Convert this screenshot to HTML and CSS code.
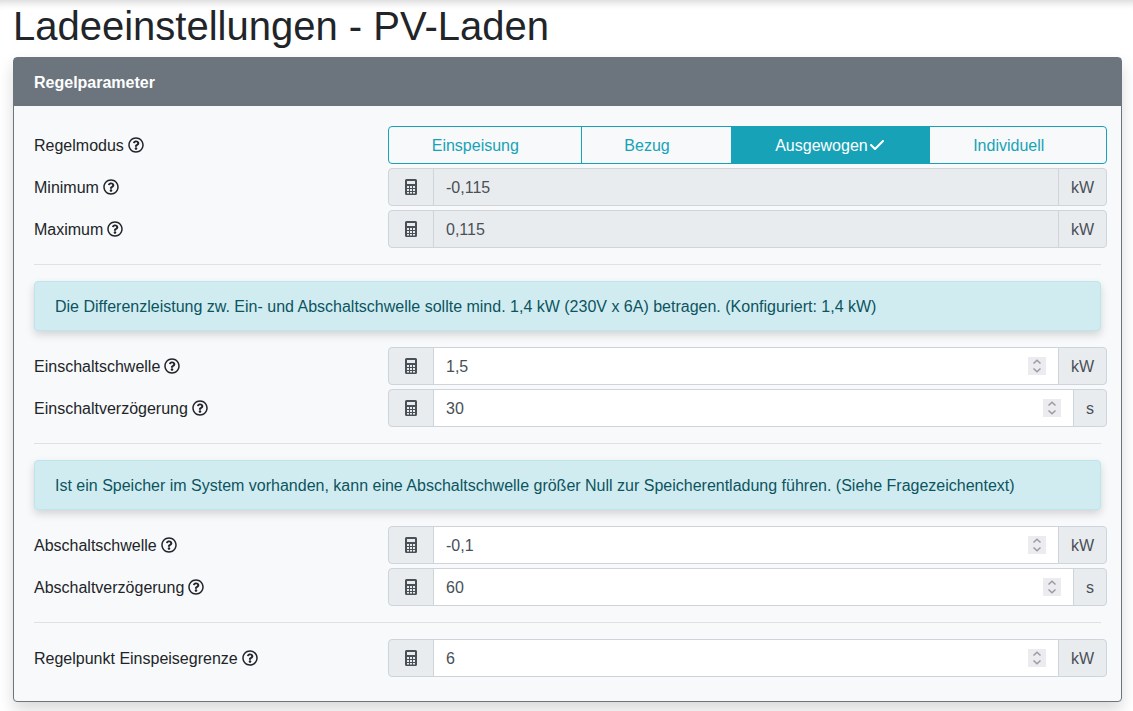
FILE: index.html
```html
<!DOCTYPE html>
<html lang="de">
<head>
<meta charset="utf-8">
<title>Ladeeinstellungen - PV-Laden</title>
<link rel="stylesheet" href="styles.css">
</head>
<body>
<svg class="sprite" aria-hidden="true">
  <symbol id="q" viewBox="0 0 512 512"><path d="M256 8C119.043 8 8 119.083 8 256c0 136.997 111.043 248 248 248s248-111.003 248-248C504 119.083 392.957 8 256 8zm0 448c-110.532 0-200-89.431-200-200 0-110.495 89.472-200 200-200 110.491 0 200 89.471 200 200 0 110.53-89.431 200-200 200zm107.244-255.2c0 67.052-72.421 68.084-72.421 92.863V300c0 6.627-5.373 12-12 12h-45.647c-6.627 0-12-5.373-12-12v-8.659c0-35.745 27.1-50.034 47.579-61.516 17.561-9.845 28.324-16.541 28.324-29.579 0-17.246-21.999-28.693-39.784-28.693-23.189 0-33.894 10.977-48.942 29.969-4.057 5.12-11.46 6.071-16.666 2.124l-27.824-21.098c-5.107-3.872-6.251-11.066-2.644-16.363C184.846 131.491 214.94 112 261.794 112c49.071 0 101.45 38.304 101.45 88.8zM298 368c0 23.159-18.841 42-42 42s-42-18.841-42-42 18.841-42 42-42 42 18.841 42 42z"/></symbol>
  <symbol id="calc" viewBox="0 0 12 16"><path fill-rule="evenodd" d="M1.5 0h9A1.5 1.5 0 0 1 12 1.5v13a1.5 1.5 0 0 1-1.5 1.5h-9A1.5 1.5 0 0 1 0 14.5v-13A1.5 1.5 0 0 1 1.5 0zM2 2v3h8V2zM2 7v2h2V7zM5 7v2h2V7zM8 7v2h2V7zM2 10v2h2v-2zM5 10v2h2v-2zM8 10v2h2v-2zM2 13v1.5h2V13zM5 13v1.5h2V13zM8 13v1.5h2V13z"/></symbol>
  <symbol id="spin" viewBox="0 0 18 18"><path d="M5.5 6.5 9 3.2 12.5 6.5M5.5 11.5 9 14.8 12.5 11.5" fill="none" stroke="#9a9aa0" stroke-width="1.5"/></symbol>
  <symbol id="tick" viewBox="0 0 448 512"><path d="M438.6 105.4c12.5 12.5 12.5 32.8 0 45.3l-256 256c-12.5 12.5-32.8 12.5-45.3 0l-128-128c-12.5-12.5-12.5-32.8 0-45.3s32.8-12.5 45.3 0L160 338.7 393.4 105.4c12.5-12.5 32.8-12.5 45.3 0z"/></symbol>
</svg>
<main class="page">
  <h1 class="title">Ladeeinstellungen - PV-Laden</h1>
  <section class="card">
    <header class="card-header">Regelparameter</header>
    <div class="card-body">
      <div class="row">
        <label class="row-label"><span class="label-text">Regelmodus</span><svg class="help"><use href="#q"/></svg></label>
        <div class="btn-group">
          <button class="seg"><span class="seg-text">Einspeisung</span><svg class="check check-hidden"><use href="#tick"/></svg></button>
          <button class="seg"><span class="seg-text">Bezug</span><svg class="check check-hidden"><use href="#tick"/></svg></button>
          <button class="seg seg-active"><span class="seg-text">Ausgewogen</span><svg class="check"><use href="#tick"/></svg></button>
          <button class="seg"><span class="seg-text">Individuell</span><svg class="check check-hidden"><use href="#tick"/></svg></button>
        </div>
      </div>
      <div class="row">
        <label class="row-label"><span class="label-text">Minimum</span><svg class="help"><use href="#q"/></svg></label>
        <div class="input-group is-disabled">
          <span class="addon addon-left"><svg class="calc"><use href="#calc"/></svg></span>
          <span class="field"><input class="value" value="-0,115" disabled></span>
          <span class="addon addon-right"><span class="unit">kW</span></span>
        </div>
      </div>
      <div class="row">
        <label class="row-label"><span class="label-text">Maximum</span><svg class="help"><use href="#q"/></svg></label>
        <div class="input-group is-disabled">
          <span class="addon addon-left"><svg class="calc"><use href="#calc"/></svg></span>
          <span class="field"><input class="value" value="0,115" disabled></span>
          <span class="addon addon-right"><span class="unit">kW</span></span>
        </div>
      </div>
      <hr class="divider">
      <div class="alert">Die Differenzleistung zw. Ein- und Abschaltschwelle sollte mind. 1,4 kW (230V x 6A) betragen. (Konfiguriert: 1,4 kW)</div>
      <div class="row">
        <label class="row-label"><span class="label-text">Einschaltschwelle</span><svg class="help"><use href="#q"/></svg></label>
        <div class="input-group">
          <span class="addon addon-left"><svg class="calc"><use href="#calc"/></svg></span>
          <span class="field"><input class="value" value="1,5"><svg class="spin"><use href="#spin"/></svg></span>
          <span class="addon addon-right"><span class="unit">kW</span></span>
        </div>
      </div>
      <div class="row">
        <label class="row-label"><span class="label-text">Einschaltverzögerung</span><svg class="help"><use href="#q"/></svg></label>
        <div class="input-group">
          <span class="addon addon-left"><svg class="calc"><use href="#calc"/></svg></span>
          <span class="field"><input class="value" value="30"><svg class="spin"><use href="#spin"/></svg></span>
          <span class="addon addon-right"><span class="unit">s</span></span>
        </div>
      </div>
      <hr class="divider">
      <div class="alert">Ist ein Speicher im System vorhanden, kann eine Abschaltschwelle größer Null zur Speicherentladung führen. (Siehe Fragezeichentext)</div>
      <div class="row">
        <label class="row-label"><span class="label-text">Abschaltschwelle</span><svg class="help"><use href="#q"/></svg></label>
        <div class="input-group">
          <span class="addon addon-left"><svg class="calc"><use href="#calc"/></svg></span>
          <span class="field"><input class="value" value="-0,1"><svg class="spin"><use href="#spin"/></svg></span>
          <span class="addon addon-right"><span class="unit">kW</span></span>
        </div>
      </div>
      <div class="row">
        <label class="row-label"><span class="label-text">Abschaltverzögerung</span><svg class="help"><use href="#q"/></svg></label>
        <div class="input-group">
          <span class="addon addon-left"><svg class="calc"><use href="#calc"/></svg></span>
          <span class="field"><input class="value" value="60"><svg class="spin"><use href="#spin"/></svg></span>
          <span class="addon addon-right"><span class="unit">s</span></span>
        </div>
      </div>
      <hr class="divider">
      <div class="row">
        <label class="row-label"><span class="label-text">Regelpunkt Einspeisegrenze</span><svg class="help"><use href="#q"/></svg></label>
        <div class="input-group">
          <span class="addon addon-left"><svg class="calc"><use href="#calc"/></svg></span>
          <span class="field"><input class="value" value="6"><svg class="spin"><use href="#spin"/></svg></span>
          <span class="addon addon-right"><span class="unit">kW</span></span>
        </div>
      </div>
    </div>
  </section>
</main>
</body>
</html>
```
FILE: styles.css
```css
* { box-sizing: border-box; }
html, body { height: 100%; }
body {
  margin: 0;
  background: #fff;
  color: #212529;
  font: 16px/24px "Liberation Sans", Arial, sans-serif;
  overflow: hidden;
}
.sprite { display: none; }
.page {
  padding: 2px 11px 0 13px;
  box-shadow: inset 0 10px 8px -8px rgba(0, 0, 0, .18);
  height: 100%;
}
.title {
  margin: 0 0 7px;
  font-size: 40px;
  font-weight: 400;
  line-height: 48px;
}
.card {
  border: 1px solid #6c757d;
  border-radius: 4px;
  background: #f8f9fa;
  box-shadow: 0 8px 16px rgba(0, 0, 0, .15);
}
.card-header {
  background: #6c757d;
  color: #fff;
  font-weight: 700;
  padding: 13px 20px 11px;
}
.card-body { padding: 20px 20px 20px; }
.row {
  display: grid;
  grid-template-columns: 354px 1fr;
  align-items: center;
  margin-right: -6px;
  margin-bottom: 4px;
}
.row-label { display: flex; align-items: center; gap: 4px; }
.label-text { padding-top: 2px; }
.help { width: 16px; height: 16px; fill: #212529; }
.btn-group { display: flex; height: 38px; }
.seg {
  flex: 1 1 auto;
  display: flex;
  align-items: center;
  justify-content: center;
  border: 1px solid #17a2b8;
  margin-left: -1px;
  background: transparent;
  color: #17a2b8;
  font: inherit;
  padding: 6px 12px;
}
.seg:first-child { margin-left: 0; border-radius: 4px 0 0 4px; }
.seg:last-child { border-radius: 0 4px 4px 0; }
.seg-text { padding-top: 2px; }
.seg-active { background: #17a2b8; color: #fff; }
.check { width: 16px; height: 16px; margin: 0 2px 0 1px; fill: #fff; }
.check-hidden { visibility: hidden; }
.input-group { display: flex; height: 38px; color: #495057; }
.addon {
  display: flex;
  align-items: center;
  justify-content: center;
  background: #e9ecef;
  border: 1px solid #ced4da;
  padding: 6px 12px;
}
.addon-left { border-radius: 4px 0 0 4px; width: 46px; }
.addon-right { border-radius: 0 4px 4px 0; margin-left: -1px; }
.unit { padding-top: 2px; }
.calc { width: 12px; height: 16px; fill: #495057; }
.field {
  flex: 1;
  display: flex;
  align-items: center;
  min-width: 0;
  margin-left: -1px;
  background: #fff;
  border: 1px solid #ced4da;
  padding: 6px 12px;
}
.is-disabled .field { background: #e9ecef; }
.value {
  flex: 1;
  min-width: 0;
  border: 0;
  padding: 2px 0 0;
  background: transparent;
  color: #495057;
  font: inherit;
  outline: 0;
}
.value:disabled { opacity: 1; color: #495057; }
.spin { width: 18px; height: 18px; background: #ececf0; flex: none; }
.divider {
  border: 0;
  border-top: 1px solid #dee2e6;
  margin: 16px 0;
}
.alert {
  background: #d1ecf1;
  border: 1px solid #bee5eb;
  border-radius: 4px;
  color: #0c5460;
  padding: 13px 20px 11px;
  margin-bottom: 16px;
  box-shadow: 0 4px 8px rgba(0, 0, 0, .15);
}
```
